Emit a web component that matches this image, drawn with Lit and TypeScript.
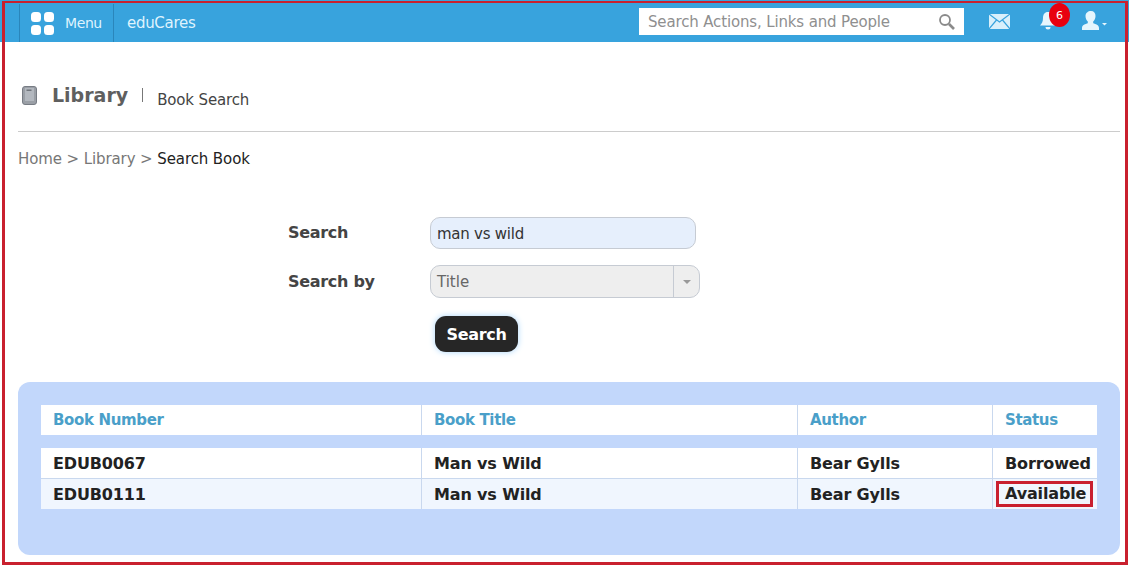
import { LitElement, html, css } from 'lit';
import { customElement } from 'lit/decorators.js';

const books = [
  { number: 'EDUB0067', title: 'Man vs Wild', author: 'Bear Gylls', status: 'Borrowed' },
  { number: 'EDUB0111', title: 'Man vs Wild', author: 'Bear Gylls', status: 'Available' },
];

@customElement('app-root')
export class AppRoot extends LitElement {
  static styles = css`
    :host {
      display: block;
      position: relative;
      height: 566px;
      overflow: hidden;
      background: #fff;
      font-family: 'DejaVu Sans', Verdana, sans-serif;
      color: #444;
    }
    .frame {
      position: absolute;
      left: 2px;
      top: 1px;
      right: 1px;
      bottom: 1px;
      border: 3px solid #c9202f;
      border-top-width: 2px;
      pointer-events: none;
    }
    .topbar {
      height: 42px;
      background: #38a3dd;
      display: flex;
      align-items: stretch;
      color: #dff3fd;
      box-sizing: border-box;
      padding: 4px 0 0 19px;
    }
    .menu {
      width: 95px;
      box-sizing: border-box;
      border-left: 1px solid #2a86bb;
      border-right: 1px solid #2a86bb;
      display: flex;
      align-items: center;
      gap: 11px;
      padding-left: 11px;
      font-size: 14px;
      letter-spacing: -0.4px;
    }
    .brand {
      display: flex;
      align-items: center;
      padding-left: 13px;
      font-size: 15px;
      letter-spacing: -0.3px;
    }
    .spacer {
      flex: 1;
    }
    .search {
      width: 325px;
      height: 27px;
      margin-top: 4px;
      margin-right: 25px;
      background: #fff;
      display: flex;
      align-items: center;
      justify-content: space-between;
      box-sizing: border-box;
      padding: 0 9px;
      color: #8f8f8f;
      font-size: 15px;
      letter-spacing: -0.15px;
    }
    .tools {
      display: flex;
      align-items: center;
      width: 140px;
      margin-top: -4px;
      box-sizing: border-box;
    }
    .bell {
      position: relative;
      display: flex;
      margin: 0 26px 0 30px;
    }
    .badge {
      position: absolute;
      left: 9px;
      top: -9px;
      width: 21px;
      height: 24px;
      border-radius: 50%;
      background: #e8000f;
      color: #fff;
      font-size: 11px;
      display: flex;
      align-items: center;
      justify-content: center;
    }
    .content {
      padding: 0 9px 0 18px;
    }
    .title {
      height: 90px;
      border-bottom: 1px solid #ccc;
      display: flex;
      align-items: center;
      box-sizing: border-box;
      padding: 17px 0 0 4px;
    }
    .title h1 {
      margin: 0 0 0 15px;
      font-size: 19px;
      font-weight: bold;
      color: #5f5f5f;
    }
    .title .sep {
      width: 1px;
      height: 14px;
      background: #777;
      margin: 0 14px 0 14px;
    }
    .title .sub {
      font-size: 15px;
      letter-spacing: -0.15px;
      color: #444;
      padding-top: 10px;
    }
    .crumbs {
      margin-top: 18px;
      font-size: 15px;
      letter-spacing: -0.1px;
      line-height: 18px;
      color: #777;
    }
    .crumbs b {
      font-weight: normal;
      color: #222;
    }
    .form {
      margin-top: 49px;
      padding-left: 270px;
      display: grid;
      grid-template-columns: 142px 1fr;
      grid-auto-rows: min-content;
    }
    .form label {
      font-weight: bold;
      font-size: 16px;
      letter-spacing: -0.3px;
      color: #444;
      line-height: 32px;
    }
    .form label.by {
      padding-top: 1px;
    }
    .field {
      width: 266px;
      height: 32px;
      box-sizing: border-box;
      border: 1px solid #c6cbd3;
      border-radius: 10px;
      background: #e6effc;
      display: flex;
      align-items: center;
      padding: 2px 0 0 6px;
      font-size: 15px;
      letter-spacing: -0.25px;
      color: #333;
      margin-bottom: 16px;
    }
    .field.select {
      width: 270px;
      height: 33px;
      background: #eee;
      color: #666;
      padding: 0;
      margin-bottom: 0;
      letter-spacing: 0;
    }
    .select span {
      flex: 1;
      padding-left: 6px;
    }
    .select i {
      width: 25px;
      height: 100%;
      border-left: 1px solid #c6cbd3;
      display: flex;
      align-items: center;
      justify-content: center;
    }
    .select i::before {
      content: '';
      border: 4px solid transparent;
      border-top-color: #999;
      border-bottom-width: 0;
    }
    .go {
      grid-column: 2;
      justify-self: start;
      margin: 18px 0 0 5px;
      height: 36px;
      width: 83px;
      border: none;
      padding: 0;
      border-radius: 11px;
      background: #262626;
      color: #fff;
      font: bold 16px 'DejaVu Sans', Verdana, sans-serif;
      letter-spacing: -0.3px;
      box-shadow: 0 0 6px #a9d6fa;
    }
    .panel {
      margin-top: 30px;
      height: 173px;
      box-sizing: border-box;
      background: #c2d7fb;
      border-radius: 12px;
      padding: 23px 23px 0;
    }
    .row {
      display: grid;
      grid-template-columns: 380px 376px 195px 105px;
      height: 31px;
      background: #fff;
      font-size: 16px;
      font-weight: bold;
      letter-spacing: -0.15px;
      color: #222;
      box-sizing: border-box;
      border-bottom: 1px solid #c9d8ee;
    }
    .row > div {
      display: flex;
      align-items: center;
      padding-left: 12px;
      border-left: 1px solid #c9d8ee;
    }
    .row > div:first-child {
      border-left: none;
    }
    .row.head {
      height: 30px;
      margin-bottom: 13px;
      font-size: 15px;
      letter-spacing: -0.35px;
      color: #4a9fc9;
      border-bottom: none;
    }
    .row.alt {
      height: 30px;
      background: #f0f6fe;
      border-bottom: none;
    }
    .flag {
      margin-left: -9px;
      padding: 0 4px 0 6px;
      line-height: 20px;
      border: 3px solid #c9202f;
    }
  `;

  render() {
    return html`
      <div class="topbar">
        <div class="menu">
          <svg width="23" height="23" viewBox="0 0 23 23" fill="#fff">
            <rect x="0" y="0" width="10" height="10" rx="3.5" />
            <rect x="13" y="0" width="10" height="10" rx="3.5" />
            <rect x="0" y="13" width="10" height="10" rx="3.5" />
            <rect x="13" y="13" width="10" height="10" rx="3.5" />
          </svg>
          Menu
        </div>
        <div class="brand">eduCares</div>
        <div class="spacer"></div>
        <div class="search">
          Search Actions, Links and People
          <svg width="17" height="17" viewBox="0 0 17 17" fill="none" stroke="#8a8a8a">
            <circle cx="7" cy="7" r="5" stroke-width="1.8" />
            <path d="M11 11l5 5" stroke-width="2.6" />
          </svg>
        </div>
        <div class="tools">
          <svg width="21" height="15" viewBox="0 0 21 15">
            <rect width="21" height="15" fill="#d9f0fb" />
            <path d="M0 0l10.5 8L21 0M0 15l7.5-9M21 15l-7.5-9" fill="none" stroke="#38a3dd" stroke-width="1.2" />
          </svg>
          <div class="bell">
            <svg width="16" height="18" viewBox="0 0 16 18" fill="#e6f6fd">
              <path d="M8 0c3.4 0 5 2.6 5 6 0 3.6 1.2 5.6 3 7.5H0C1.800 11.600 3 9.600 3 6c0-3.400 1.600-6 5-6z" />
              <path d="M5.500 15h5a2.500 2.500 0 0 1-5 0z" />
            </svg>
            <span class="badge">6</span>
          </div>
          <svg width="26" height="20" viewBox="0 0 26 20" fill="#e6f6fd">
            <path d="M9 0c3 0 4.500 2 4.500 5 0 2.500-1 4.500-2.300 5.500v1.700c2.300.8 5.800 1.600 5.800 4.800v2H0v-2c0-3.200 3.500-4 5.800-4.800v-1.700C4.500 9.500 3.500 7.500 3.500 5c0-3 2.500-5 5.500-5z" />
            <path d="M20 12h5l-2.500 2.500z" />
          </svg>
        </div>
      </div>

      <div class="content">
        <div class="title">
          <svg width="15" height="19" viewBox="0 0 15 19">
            <rect x="0.500" y="0.500" width="14" height="18" rx="2.500" fill="#9a9fa6" stroke="#777c84" />
            <rect x="3" y="2" width="9" height="13" fill="#b3b8bf" />
            <rect x="4.500" y="3.500" width="5" height="1.500" fill="#70757c" />
          </svg>
          <h1>Library</h1>
          <span class="sep"></span>
          <span class="sub">Book Search</span>
        </div>
        <div class="crumbs">Home &gt; Library &gt; <b>Search Book</b></div>

        <div class="form">
          <label>Search</label>
          <div class="field">man vs wild</div>
          <label class="by">Search by</label>
          <div class="field select"><span>Title</span><i></i></div>
          <button class="go">Search</button>
        </div>

        <div class="panel">
          <div class="row head">
            <div>Book Number</div>
            <div>Book Title</div>
            <div>Author</div>
            <div>Status</div>
          </div>
          ${books.map(
            (b, i) => html`
              <div class="row ${i % 2 ? 'alt' : ''}">
                <div>${b.number}</div>
                <div>${b.title}</div>
                <div>${b.author}</div>
                <div>${b.status === 'Available' ? html`<span class="flag">${b.status}</span>` : b.status}</div>
              </div>
            `,
          )}
        </div>
      </div>
      <div class="frame"></div>
    `;
  }
}
